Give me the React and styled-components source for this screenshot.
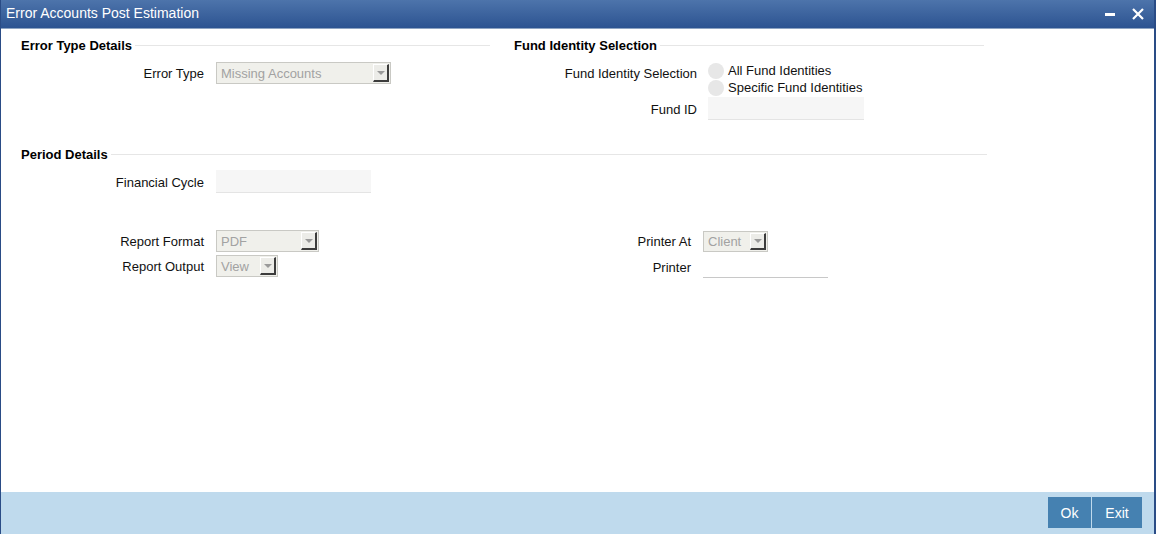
import React from 'react';
import styled, { createGlobalStyle } from 'styled-components';

const Global = createGlobalStyle`
  html, body { margin: 0; padding: 0; background: #fff; }
  body { font-family: "Liberation Sans", Arial, sans-serif; color: #000; }
`;

const Window = styled.div`
  width: 1156px;
  height: 534px;
  box-sizing: border-box;
  border-left: 1px solid #2a4c86;
  border-right: 2px solid #2a4c86;
  display: flex;
  flex-direction: column;
  background: #fff;
`;

const TitleBar = styled.div`
  height: 28px;
  flex: none;
  display: flex;
  align-items: center;
  padding: 0 8px 0 5px;
  background: linear-gradient(#4d74ab, #2c5391);
  border-bottom: 1px solid #8da3c2;
  color: #fff;
  font-size: 14px;
`;

const TitleText = styled.div`
  flex: 1;
  padding-bottom: 2px;
`;

const TitleButton = styled.div`
  width: ${p => p.$w}px;
  height: 20px;
  display: flex;
  align-items: center;
  justify-content: center;
  margin-left: ${p => p.$ml || 0}px;
`;

const Body = styled.div`
  flex: 1;
  padding: 7px 0 0 20px;
  display: flex;
  flex-direction: column;
`;

const TopRow = styled.div`
  display: flex;
`;

const Column = styled.div`
  width: ${p => p.$w}px;
  margin-right: ${p => p.$mr || 0}px;
  display: flex;
  flex-direction: column;
`;

const SectionHead = styled.div`
  height: 18px;
  display: flex;
  align-items: center;
  font-size: 13px;
  font-weight: bold;
  width: ${p => p.$w}px;
  margin-top: ${p => p.$mt || 0}px;
  &::after {
    content: "";
    flex: 1;
    height: 1px;
    margin-left: 3px;
    background: #e6e6e6;
  }
`;

const FieldRow = styled.div`
  display: flex;
  align-items: flex-start;
  margin-top: ${p => p.$mt || 0}px;
`;

const Label = styled.div`
  width: ${p => p.$w || 183}px;
  flex: none;
  text-align: right;
  font-size: 13px;
  line-height: ${p => p.$lh || 22}px;
  padding-top: 1px;
  margin-bottom: -1px;
  padding-right: ${p => p.$gap || 12}px;
  box-sizing: content-box;
  color: #111;
`;

const SelectBox = styled.div`
  width: ${p => p.$w}px;
  height: ${p => p.$h || 22}px;
  box-sizing: border-box;
  border: 1px solid #c9c9c4;
  background: #f0f0eb;
  display: flex;
  align-items: center;
  justify-content: space-between;
  padding: 0 1px 0 4px;
  font-size: 13px;
  color: #a2a2a2;
`;

const ArrowBtn = styled.div`
  width: 16px;
  height: ${p => p.$h || 18}px;
  box-sizing: border-box;
  border-top: 1px solid #fff;
  border-left: 1px solid #fff;
  border-right: 2px solid #3c3c3c;
  border-bottom: 2px solid #3c3c3c;
  background: #ecece8;
  display: flex;
  align-items: center;
  justify-content: center;
  &::before {
    content: "";
    border-left: 4px solid transparent;
    border-right: 4px solid transparent;
    border-top: 4px solid #9a9a9a;
  }
`;

const TextBox = styled.div`
  width: ${p => p.$w}px;
  height: 23px;
  box-sizing: border-box;
  background: ${p => (p.$plain ? '#fff' : '#f6f6f6')};
  border-bottom: 1px solid ${p => (p.$plain ? '#c8c8c8' : '#e4e4e4')};
`;

const RadioGroup = styled.div`
  display: flex;
  flex-direction: column;
`;

const RadioItem = styled.label`
  height: 17px;
  display: flex;
  align-items: center;
  font-size: 13px;
  color: #111;
`;

const RadioDot = styled.span`
  width: 16px;
  height: 16px;
  border-radius: 50%;
  background: #e7e7e7;
  margin-right: 4px;
  flex: none;
`;

const ReportRow = styled.div`
  display: flex;
  margin-top: ${p => p.$mt || 0}px;
`;

const Footer = styled.div`
  height: 42px;
  flex: none;
  background: #bfdaed;
  display: flex;
  align-items: center;
  justify-content: flex-end;
  padding-right: 12px;
  gap: 1px;
`;

const Button = styled.button`
  height: 31px;
  width: ${p => p.$w}px;
  border: none;
  background: #4581b1;
  color: #fff;
  font-family: "Liberation Sans", Arial, sans-serif;
  font-size: 14px;
  padding: 0;
  margin-top: -1px;
`;

const Select = ({ value, w, h, ah }) => (
  <SelectBox $w={w} $h={h}>
    <span>{value}</span>
    <ArrowBtn $h={ah} />
  </SelectBox>
);

export default function App() {
  return (
    <>
      <Global />
      <Window>
        <TitleBar>
          <TitleText>Error Accounts Post Estimation</TitleText>
          <TitleButton $w={16}>
            <svg width="10" height="3" viewBox="0 0 10 3"><rect width="10" height="3" fill="#fff" /></svg>
          </TitleButton>
          <TitleButton $w={16} $ml={12}>
            <svg width="12" height="12" viewBox="0 0 12 12">
              <path d="M1 1 L11 11 M11 1 L1 11" stroke="#fff" strokeWidth="2.2" />
            </svg>
          </TitleButton>
        </TitleBar>
        <Body>
          <TopRow>
            <Column $w={469} $mr={24}>
              <SectionHead $w={469}>Error Type Details</SectionHead>
              <FieldRow $mt={8}>
                <Label>Error Type</Label>
                <Select value="Missing Accounts" w={175} />
              </FieldRow>
            </Column>
            <Column $w={470}>
              <SectionHead $w={470}>Fund Identity Selection</SectionHead>
              <FieldRow $mt={8}>
                <Label $gap={11}>Fund Identity Selection</Label>
                <RadioGroup>
                  <RadioItem><RadioDot />All Fund Identities</RadioItem>
                  <RadioItem><RadioDot />Specific Fund Identities</RadioItem>
                </RadioGroup>
              </FieldRow>
              <FieldRow $mt={1}>
                <Label $gap={11} $lh={23}>Fund ID</Label>
                <TextBox $w={156} />
              </FieldRow>
            </Column>
          </TopRow>
          <SectionHead $w={966} $mt={25}>Period Details</SectionHead>
          <FieldRow $mt={7}>
            <Label $lh={23}>Financial Cycle</Label>
            <TextBox $w={155} />
          </FieldRow>
          <ReportRow $mt={37}>
            <Column $w={487}>
              <FieldRow>
                <Label>Report Format</Label>
                <Select value="PDF" w={103} />
              </FieldRow>
              <FieldRow $mt={3}>
                <Label>Report Output</Label>
                <Select value="View" w={62} />
              </FieldRow>
            </Column>
            <Column $w={400}>
              <FieldRow $mt={1}>
                <Label $lh={20}>Printer At</Label>
                <Select value="Client" w={65} h={21} ah={17} />
              </FieldRow>
              <FieldRow $mt={3}>
                <Label $lh={23}>Printer</Label>
                <TextBox $w={125} $plain />
              </FieldRow>
            </Column>
          </ReportRow>
        </Body>
        <Footer>
          <Button $w={43}>Ok</Button>
          <Button $w={50}>Exit</Button>
        </Footer>
      </Window>
    </>
  );
}
